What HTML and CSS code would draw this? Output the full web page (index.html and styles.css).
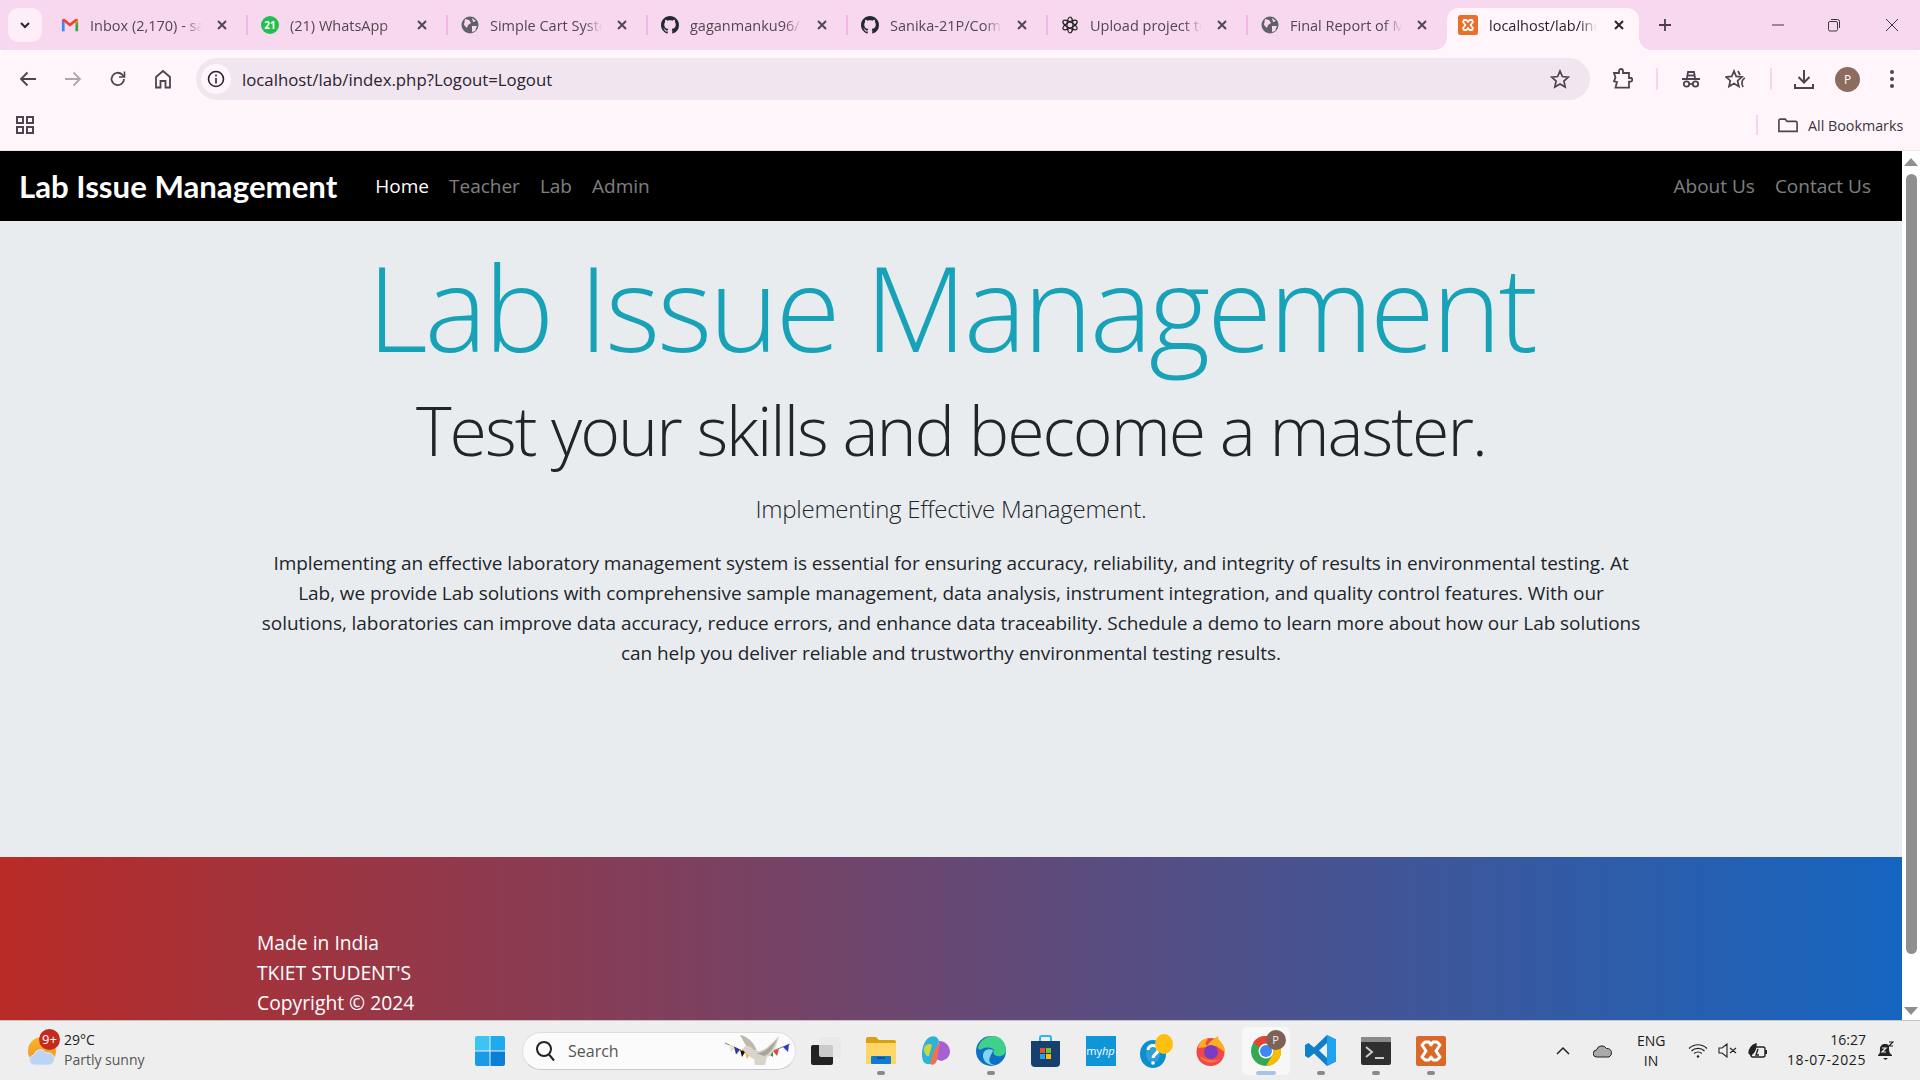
FILE: index.html
```html
<!DOCTYPE html>
<html lang="en">
<head>
    <meta charset="UTF-8">
    <title>Lab Issue Management</title>
    <link rel="stylesheet" href="styles.css">
</head>
<body>
    <div class="tabstrip">
        <div class="tab-menu"><svg width="14" height="14" viewBox="0 0 14 14"><path d="M3 5l4 4 4-4" fill="none" stroke="#2b2230" stroke-width="2"/></svg></div>
        <div class="tab">
            <svg class="favicon" viewBox="0 0 20 16"><path d="M1 15V3l3 2v10H2.500A1.500 1.500 0 0 1 1 15z" fill="#4285f4"/><path d="M16 15V5l3-2v12h-3z" fill="#34a853"/><path d="M1 3.500C1 1 3 .5 4.500 1.500L10 6l5.500-4.500C17 .5 19 1 19 3.500L16 6v-1l-6 5-6-5z" fill="#ea4335"/><path d="M16 5l3-2.500V4l-3 2.500z" fill="#fbbc04"/></svg>
            <span class="tab-title">Inbox (2,170) - sa</span>
            <svg class="tab-close" width="12" height="12" viewBox="0 0 12 12"><path d="M2 2l8 8M10 2l-8 8"/></svg>
        </div>
        <div class="tab">
            <span class="favicon wa-icon">21</span>
            <span class="tab-title">(21) WhatsApp</span>
            <svg class="tab-close" width="12" height="12" viewBox="0 0 12 12"><path d="M2 2l8 8M10 2l-8 8"/></svg>
        </div>
        <div class="tab">
            <svg class="favicon" viewBox="0 0 18 18"><circle cx="9" cy="9" r="8.500" fill="#5f6368"/><path d="M4 3l4 1 2 3-3 2-1 3-3-3zM11 2l4 3-3 1zM11 10l5 0-2 5-3 1z" fill="#f7d8ee"/></svg>
            <span class="tab-title">Simple Cart Syste</span>
            <svg class="tab-close" width="12" height="12" viewBox="0 0 12 12"><path d="M2 2l8 8M10 2l-8 8"/></svg>
        </div>
        <div class="tab">
            <svg class="favicon" viewBox="0 0 16 16"><path fill="#24292f" d="M8 0C3.58 0 0 3.58 0 8c0 3.54 2.29 6.530 5.470 7.590.4.07.55-.17.55-.38 0-.19-.01-.82-.01-1.490-2.010.37-2.530-.49-2.690-.94-.09-.23-.48-.94-.82-1.130-.28-.15-.68-.52-.01-.53.63-.01 1.080.58 1.230.82.72 1.210 1.870.87 2.330.66.07-.52.28-.87.51-1.070-1.780-.2-3.640-.89-3.640-3.950 0-.87.31-1.590.82-2.150-.08-.2-.36-1.020.08-2.120 0 0 .67-.21 2.200.82.64-.18 1.320-.27 2-.27.68 0 1.360.09 2 .27 1.530-1.040 2.200-.82 2.200-.82.44 1.100.16 1.920.08 2.120.51.56.82 1.270.82 2.150 0 3.070-1.870 3.750-3.650 3.950.29.25.54.73.54 1.480 0 1.070-.01 1.930-.01 2.200 0 .21.15.46.55.38A8.013 8.013 0 0 0 16 8c0-4.420-3.580-8-8-8z"/></svg>
            <span class="tab-title">gaganmanku96/</span>
            <svg class="tab-close" width="12" height="12" viewBox="0 0 12 12"><path d="M2 2l8 8M10 2l-8 8"/></svg>
        </div>
        <div class="tab">
            <svg class="favicon" viewBox="0 0 16 16"><path fill="#24292f" d="M8 0C3.58 0 0 3.58 0 8c0 3.54 2.29 6.530 5.470 7.590.4.07.55-.17.55-.38 0-.19-.01-.82-.01-1.490-2.010.37-2.530-.49-2.690-.94-.09-.23-.48-.94-.82-1.130-.28-.15-.68-.52-.01-.53.63-.01 1.080.58 1.230.82.72 1.210 1.870.87 2.330.66.07-.52.28-.87.51-1.070-1.780-.2-3.640-.89-3.640-3.950 0-.87.31-1.590.82-2.150-.08-.2-.36-1.020.08-2.120 0 0 .67-.21 2.200.82.64-.18 1.320-.27 2-.27.68 0 1.360.09 2 .27 1.530-1.040 2.200-.82 2.200-.82.44 1.100.16 1.920.08 2.120.51.56.82 1.270.82 2.150 0 3.070-1.870 3.750-3.650 3.950.29.25.54.73.54 1.480 0 1.070-.01 1.930-.01 2.200 0 .21.15.46.55.38A8.013 8.013 0 0 0 16 8c0-4.420-3.580-8-8-8z"/></svg>
            <span class="tab-title">Sanika-21P/Com</span>
            <svg class="tab-close" width="12" height="12" viewBox="0 0 12 12"><path d="M2 2l8 8M10 2l-8 8"/></svg>
        </div>
        <div class="tab">
            <svg class="favicon" viewBox="0 0 18 18" fill="none" stroke="#222" stroke-width="1.200"><ellipse cx="9" cy="9" rx="3" ry="8"/><ellipse cx="9" cy="9" rx="3" ry="8" transform="rotate(60 9 9)"/><ellipse cx="9" cy="9" rx="3" ry="8" transform="rotate(120 9 9)"/></svg>
            <span class="tab-title">Upload project to</span>
            <svg class="tab-close" width="12" height="12" viewBox="0 0 12 12"><path d="M2 2l8 8M10 2l-8 8"/></svg>
        </div>
        <div class="tab">
            <svg class="favicon" viewBox="0 0 18 18"><circle cx="9" cy="9" r="8.500" fill="#5f6368"/><path d="M4 3l4 1 2 3-3 2-1 3-3-3zM11 2l4 3-3 1zM11 10l5 0-2 5-3 1z" fill="#f7d8ee"/></svg>
            <span class="tab-title">Final Report of M</span>
            <svg class="tab-close" width="12" height="12" viewBox="0 0 12 12"><path d="M2 2l8 8M10 2l-8 8"/></svg>
        </div>
        <div class="tab active">
            <svg class="favicon" viewBox="0 0 20 20"><rect width="20" height="20" rx="2.500" fill="#e8702a"/><path d="M6 5h2.500l1.500 2 1.500-2H14l1 2-2.500 3 2.500 3-1 2h-2.500L10 13l-1.500 2H6l-1-2 2.500-3L5 7z" fill="none" stroke="#fff" stroke-width="1.800" stroke-linejoin="round"/></svg>
            <span class="tab-title">localhost/lab/ind</span>
            <svg class="tab-close" width="12" height="12" viewBox="0 0 12 12"><path d="M2 2l8 8M10 2l-8 8"/></svg>
        </div>
        <div class="new-tab"><svg width="14" height="14" viewBox="0 0 14 14"><path d="M7 1v12M1 7h12" stroke="#4a3d4a" stroke-width="1.800"/></svg></div>
        <div class="window-btns">
            <svg width="14" height="14" viewBox="0 0 14 14"><path d="M1 7h12" stroke="#3a3a3a"/></svg>
            <svg width="14" height="14" viewBox="0 0 14 14" fill="none" stroke="#3a3a3a"><rect x="1.500" y="3.500" width="9" height="9.500" rx="1.500"/><path d="M4 1.500h6.500a2 2 0 0 1 2 2V10"/></svg>
            <svg class="win-close" width="14" height="14" viewBox="0 0 14 14"><path d="M1 1l12 12M13 1L1 13" stroke="#3a3a3a"/></svg>
        </div>
    </div>

    <div class="toolbar">
        <div class="tool-btn"><svg width="18" height="18" viewBox="0 0 18 18" fill="none" stroke="#4f434f" stroke-width="1.800"><path d="M17 9H2M8.500 2.500L2 9l6.500 6.500"/></svg></div>
        <div class="tool-btn"><svg width="18" height="18" viewBox="0 0 18 18" fill="none" stroke="#b0a6ae" stroke-width="1.800"><path d="M1 9h15M9.500 2.500L16 9l-6.500 6.500"/></svg></div>
        <div class="tool-btn"><svg width="18" height="18" viewBox="0 0 18 18" fill="none" stroke="#4f434f" stroke-width="1.800"><path d="M15 9a6.200 6.200 0 1 1-1.800-4.400L15 6.500"/><path d="M15.500 1.500v5.500H10" stroke-width="1.600"/></svg></div>
        <div class="tool-btn"><svg width="18" height="20" viewBox="0 0 18 20" fill="none" stroke="#4f434f" stroke-width="1.800"><path d="M2 8l7-6 7 6v10.500h-4.500V12h-5v6.500H2z"/></svg></div>
        <div class="omnibox">
            <div class="info-btn"><svg width="18" height="18" viewBox="0 0 18 18" fill="none" stroke="#2b2230" stroke-width="1.600"><circle cx="9" cy="9" r="7.500"/><path d="M9 8v5.500M9 4.500v2"/></svg></div>
            <span class="url">localhost/lab/index.php?Logout=Logout</span>
            <svg class="omni-star" width="20" height="20" viewBox="0 0 20 20" fill="none" stroke="#4f434f" stroke-width="1.700"><path d="M10 2l2.400 5.500 6 .6-4.500 4 1.300 5.900L10 15l-5.200 3 1.300-5.900-4.500-4 6-.6z"/></svg>
        </div>
        <div class="tool-right">
            <div class="tool-slot puzzle"><svg width="22" height="22" viewBox="0 0 22 22" fill="none" stroke="#4f434f" stroke-width="1.800"><path d="M3 5h5V3a2 2 0 0 1 4 0v2h6v5h1.500a1.800 1.800 0 0 1 0 3.600H18v6H4.500l1.500-5.500-3-1 1.500-3.500z"/></svg></div>
            <span class="tool-sep"></span>
            <div class="tool-slot incog"><svg width="20" height="20" viewBox="0 0 20 20" fill="none" stroke="#4f434f" stroke-width="1.800"><path d="M6 9l1-6h6l1 6M1 10h18"/><path d="M6 6.500h8"/><circle cx="5.500" cy="15" r="2.700"/><circle cx="14.500" cy="15" r="2.700"/><path d="M8 15h4"/></svg></div>
            <div class="tool-slot star-list"><svg width="22" height="20" viewBox="0 0 22 20" fill="none" stroke="#4f434f" stroke-width="1.700"><path d="M9 2l2.200 5.400 5.800.5-4.400 3.800 1.300 5.800L9 14.500 4 17.500l1.300-5.800L1 7.900l5.800-.5z"/><path d="M13 2l2 4M20 9c-3 1-4 5-2 9"/></svg></div>
            <span class="tool-sep second"></span>
            <div class="tool-slot download"><svg width="22" height="22" viewBox="0 0 22 22" fill="none" stroke="#4f434f" stroke-width="2"><path d="M11 2v12M5.500 9l5.500 5.500L16.500 9M2 16v4h18v-4"/></svg></div>
            <div class="avatar">P</div>
            <div class="tool-slot kebab"><svg width="6" height="20" viewBox="0 0 6 20" fill="#4f434f"><circle cx="3" cy="3" r="2"/><circle cx="3" cy="10" r="2"/><circle cx="3" cy="17" r="2"/></svg></div>
        </div>
    </div>

    <div class="bookmarks">
        <svg width="18" height="18" viewBox="0 0 18 18" fill="none" stroke="#4f434f" stroke-width="2"><rect x="1" y="1" width="6" height="6"/><rect x="11" y="1" width="6" height="6"/><rect x="1" y="11" width="6" height="6"/><rect x="11" y="11" width="6" height="6"/></svg>
        <span class="book-sep"></span>
        <svg class="folder" width="20" height="15" viewBox="0 0 22 16" fill="none" stroke="#4f434f" stroke-width="1.800"><path d="M1 2.500A1.500 1.500 0 0 1 2.500 1H8l2 2.500h9.500A1.500 1.500 0 0 1 21 5v9.500H1z"/></svg>
        <span class="book-label">All Bookmarks</span>
    </div>

    <div class="viewport">
        <div class="page">
            <nav class="navbar">
                <a class="brand">Lab Issue Management</a>
                <a class="nav-link current">Home</a>
                <a class="nav-link">Teacher</a>
                <a class="nav-link">Lab</a>
                <a class="nav-link">Admin</a>
                <div class="nav-right">
                    <a class="nav-link">About Us</a>
                    <a class="nav-link">Contact Us</a>
                </div>
            </nav>
            <main class="hero">
                <h1 class="hero-title">Lab Issue Management</h1>
                <h2 class="hero-sub">Test your skills and become a master.</h2>
                <h4 class="hero-lead">Implementing Effective Management.</h4>
                <p class="hero-text">Implementing an effective laboratory management system is essential for ensuring accuracy, reliability, and integrity of results in environmental testing. At Lab, we provide Lab solutions with comprehensive sample management, data analysis, instrument integration, and quality control features. With our solutions, laboratories can improve data accuracy, reduce errors, and enhance data traceability. Schedule a demo to learn more about how our Lab solutions can help you deliver reliable and trustworthy environmental testing results.</p>
            </main>
            <footer class="footer">
                <p>Made in India</p>
                <p>TKIET STUDENT'S</p>
                <p>Copyright © 2024</p>
            </footer>
        </div>
        <div class="scrollbar">
            <span class="arrow-up"></span>
            <span class="thumb"></span>
            <span class="arrow-down"></span>
        </div>
    </div>

    <div class="taskbar">
        <div class="weather">
            <div class="weather-icon">
                <svg width="30" height="34" viewBox="0 0 30 34"><defs><linearGradient id="sun" x1="0" y1="0" x2="0" y2="1"><stop offset="0" stop-color="#f9b72c"/><stop offset="1" stop-color="#ef8f1e"/></linearGradient></defs><circle cx="15" cy="17" r="14" fill="url(#sun)"/><path d="M8 31a5 5 0 0 1-1-10 6.500 6.500 0 0 1 12-2 5.500 5.500 0 0 1 4 12z" fill="#bcd4f2" stroke="#dfeafa"/></svg>
                <span class="weather-badge">9+</span>
            </div>
            <div class="weather-text">
                <span>29°C</span>
                <span class="weather-sub">Partly sunny</span>
            </div>
        </div>
        <svg class="win-logo" width="30" height="30" viewBox="0 0 30 30"><path d="M0 2a2 2 0 0 1 2-2h12.500v14.500H0z" fill="#3cc4f5"/><path d="M15.500 0H28a2 2 0 0 1 2 2v12.500H15.500z" fill="#1eaaf0"/><path d="M0 15.500h14.500V30H2a2 2 0 0 1-2-2z" fill="#1a9be8"/><path d="M15.500 15.500H30V28a2 2 0 0 1-2 2H15.500z" fill="#0b7fd6"/></svg>
        <div class="searchbox">
            <svg width="20" height="22" viewBox="0 0 20 22" fill="none" stroke="#222" stroke-width="2"><circle cx="9" cy="9" r="7"/><path d="M14 14.500l5 6"/></svg>
            <span>Search</span>
            <svg class="dove" width="66" height="32" viewBox="0 0 66 32">
                <path d="M0 8l26 12M40 19l25-10" stroke="#8a7f78" fill="none"/>
                <path d="M4 9l7 3-5 5zM10 12l6 3-4 5z" fill="#e8dfc8"/>
                <path d="M9 11.500l6 3-4 5z" fill="#2a3a9a"/>
                <path d="M15 14.500l5 2.500-3 5z" fill="#111"/>
                <path d="M20 17l5 2-3 5z" fill="#f5b324"/>
                <path d="M42 18l6-2 0 6z" fill="#1c9a4a"/>
                <path d="M48 16l6-2-2 7z" fill="#e0443e"/>
                <path d="M58 12l6-3-1 8z" fill="#2a3acc"/>
                <path d="M15 0c7 1 14 7 17 16l-8-2C20 10 18 5 15 0z" fill="#bdb8ac"/>
                <path d="M18 14c1-4 7-4 11 1 8 4 15-4 25-14-2 9-6 19-12 21l-2 8H30l-1-6c-5-2-9-6-11-10z" fill="#d8d4ca"/>
                <path d="M31 18c7 1 14-6 21-14-3 8-7 15-13 17z" fill="#a8a59c"/>
                <path d="M18 14l-3 2 4 0z" fill="#e8813a"/>
            </svg>
        </div>
        <div class="task-icons">
            <div class="task-icon"><svg width="30" height="28" viewBox="0 0 30 28"><rect y="8" width="22" height="20" rx="2" fill="#222"/><rect x="8" width="22" height="20" rx="2" fill="#e8e8e8" opacity=".85"/></svg></div>
            <div class="task-icon open"><svg width="30" height="27" viewBox="0 0 30 27"><path d="M0 2a2 2 0 0 1 2-2h8l3 3h15a2 2 0 0 1 2 2v3H0z" fill="#d9a00f"/><path d="M0 6h30v21H0z" fill="#fcd768"/><rect x="5" y="19" width="20" height="8" rx="1" fill="#0f7ccf"/><path d="M11 21h8" stroke="#0b4a86" stroke-width="1.500"/></svg></div>
            <div class="task-icon"><svg width="28" height="30" viewBox="0 0 28 30"><path d="M8 1c4-2 8 0 9 4L12 22c-1 4-3 7-7 6-4-1-5-5-5-10C0 11 3 3 8 1z" fill="#2fb2d8"/><path d="M17 5c5 0 10 3 11 10 0 6-4 9-9 10l-5-2z" fill="#a65fd5"/><path d="M12 14l6-8-3 18c-1 4-4 6-7 4z" fill="#f0734f"/><path d="M2 12c2-4 5-5 8-3l-3 11c-3 1-5-3-5-8z" fill="#c9d642"/></svg></div>
            <div class="task-icon open"><svg width="30" height="30" viewBox="0 0 30 30"><circle cx="15" cy="15" r="15" fill="#0f6fc4"/><path d="M2 12C4 3 12 0 17 0c8 0 13 7 13 14 0 5-5 7-9 6-4-1-4-4-3-6-3-3-8-3-12-1-2 1-3 1-4-1z" fill="#3fd089"/><path d="M17 14c-5-2-10 0-10 6 0 5 5 10 13 9-6 0-8-4-6-8 1-3 3-5 3-7z" fill="#7fd4f4"/></svg></div>
            <div class="task-icon"><svg width="29" height="32" viewBox="0 0 29 32"><path d="M9 6V3a2 2 0 0 1 2-2h7a2 2 0 0 1 2 2v3" fill="none" stroke="#2bb5ee" stroke-width="2"/><path d="M0 6h29v22a4 4 0 0 1-4 4H4a4 4 0 0 1-4-4z" fill="#17406f"/><rect x="9" y="13" width="5" height="5" fill="#e8502a"/><rect x="15" y="13" width="5" height="5" fill="#7cbb2a"/><rect x="9" y="19" width="5" height="5" fill="#1ea3e8"/><rect x="15" y="19" width="5" height="5" fill="#fbbc04"/></svg></div>
            <div class="task-icon"><span class="myhp">my<i>hp</i></span></div>
            <div class="task-icon">
                <svg width="34" height="34" viewBox="0 0 34 34"><ellipse cx="14" cy="20" rx="13" ry="14" fill="#0b8fcf"/><ellipse cx="14" cy="20" rx="7" ry="9" fill="#fff" opacity=".15"/><path d="M9 16c0-6 10-6 10 0 0 4-5 4-5 8" fill="none" stroke="#fff" stroke-width="3"/><circle cx="14" cy="29" r="1.800" fill="#fff"/><ellipse cx="25" cy="10" rx="9" ry="10" fill="#fdc010"/></svg>
            </div>
            <div class="task-icon"><svg width="29" height="30" viewBox="0 0 29 30"><circle cx="14.500" cy="16" r="14" fill="#f0484a"/><path d="M2 12C4 4 10 1 12 4c-3 1-3 4-1 6 3-5 8-8 11-10 0 3 1 4 3 6 2 3 4 6 4 10L20 10z" fill="#fcae1c"/><circle cx="15" cy="16" r="7" fill="#7a3cc4"/><path d="M4 20c3 7 13 9 20 3-5 2-14 2-20-3z" fill="#f97c29"/></svg></div>
            <div class="task-icon chrome">
                <svg width="30" height="30" viewBox="0 0 30 30"><circle cx="15" cy="15" r="15" fill="#34a853"/><path d="M15 0a15 15 0 0 1 13 7.500H15a7.500 7.500 0 0 0-6.500 3.700L2.200 6.500A15 15 0 0 1 15 0z" fill="#ea4335"/><path d="M28 7.500A15 15 0 0 1 15 30l6.500-11.200A7.500 7.500 0 0 0 21.500 11z" fill="#fbbc04"/><circle cx="15" cy="15" r="7.500" fill="#fff"/><circle cx="15" cy="15" r="6" fill="#4285f4"/></svg>
                <span class="chrome-badge">P</span>
            </div>
            <div class="task-icon open"><svg width="31" height="31" viewBox="0 0 31 31"><path d="M22 0l9 4.500v22L22 31 9 18.500 3.500 23 0 21V10l3.500-2L9 12.500z" fill="#0f7fc9"/><path d="M22 0l9 4.500v22L22 31z" fill="#21a2ee"/><path d="M22 8l-8 7.500 8 7.500z" fill="#eef"/></svg></div>
            <div class="task-icon open"><svg width="30" height="28" viewBox="0 0 30 28"><rect width="30" height="28" rx="2" fill="#2f2f2f"/><path d="M0 2a2 2 0 0 1 2-2h26a2 2 0 0 1 2 2v3H0z" fill="#8a8a8a"/><path d="M5 10l6 5-6 5" fill="none" stroke="#ccc" stroke-width="2"/><path d="M14 21h9" stroke="#ccc" stroke-width="2"/></svg></div>
            <div class="task-icon open"><svg width="30" height="30" viewBox="0 0 30 30"><rect width="30" height="30" rx="2" fill="#d9692b"/><path d="M9 6h4l2 3 2-3h4l3 3-4 6 4 6-3 3h-4l-2-3-2 3H9l-3-3 4-6-4-6z" fill="none" stroke="#fff" stroke-width="3" stroke-linejoin="round"/></svg></div>
        </div>
        <div class="tray">
            <svg class="tray-chevron" width="14" height="9" viewBox="0 0 14 9" fill="none" stroke="#222" stroke-width="1.500"><path d="M1 8l6-6 6 6"/></svg>
            <svg class="tray-cloud" width="20" height="14" viewBox="0 0 20 14"><path d="M4 13a3.500 3.500 0 0 1-.5-7 5.500 5.500 0 0 1 10-1.500A4.500 4.500 0 0 1 16 13z" fill="#aaa" stroke="#222"/></svg>
            <div class="tray-lang">ENG<br>IN</div>
            <svg class="tray-wifi" width="20" height="15" viewBox="0 0 20 15" fill="none" stroke="#222" stroke-width="1.200"><path d="M1 5.500c5-5 13-5 18 0M3.500 8c3.500-3.500 9.500-3.500 13 0M6.200 10.500c2-2 5.600-2 7.600 0"/><circle cx="10" cy="13.500" r="1.200" fill="#222" stroke="none"/></svg>
            <svg class="tray-sound" width="19" height="15" viewBox="0 0 19 15" fill="none" stroke="#222" stroke-width="1.100"><path d="M1 5v5h3l5 4V1L4 5zM12 5l6 5M18 5l-6 5"/></svg>
            <svg class="tray-battery" width="20" height="16" viewBox="0 0 20 16" fill="none" stroke="#222" stroke-width="1.400"><rect x="3" y="4" width="14" height="10" rx="2"/><path d="M18 7v4" stroke-width="2"/><path d="M1 10c0-4 3-8 7-9 0 5-1 8-5 11z" fill="#222"/><path d="M10 6l-2 6h3" /></svg>
            <div class="tray-clock">16:27<br><span class="tray-date">18-07-2025</span></div>
            <svg class="tray-bell" width="17" height="20" viewBox="0 0 17 20"><path d="M1 14c2-1 2-3 2-6 0-3 2-5 5-5 1 0 3 0 4 2v3c0 3 1 5 3 6v1H1z" fill="#222"/><path d="M6 17h5l-2.500 2z" fill="#222"/><path d="M5 7h4L5 11h4" fill="none" stroke="#eee" stroke-width="1.200"/><path d="M12 1h4l-4 4h4" fill="none" stroke="#222" stroke-width="1.200"/></svg>
        </div>
    </div>
</body>
</html>
```

FILE: styles.css
```css
* {
    box-sizing: border-box;
}
html, body {
    margin: 0;
    padding: 0;
    height: 1080px;
    overflow: hidden;
}
body {
    font-family: "Open Sans", "Noto Sans", sans-serif;
    display: flex;
    flex-direction: column;
    background-color: #fff;
    color: #212529;
}
h1, h2, h4, p {
    margin: 0;
}

/* browser tabs */
.tabstrip {
    display: flex;
    align-items: center;
    height: 50px;
    flex-shrink: 0;
    padding-left: 8px;
    background-color: #f7d8ee;
}
.tab-menu {
    display: flex;
    justify-content: center;
    align-items: center;
    width: 34px;
    height: 34px;
    margin-right: 4px;
    border-radius: 10px;
    background-color: #fdeef8;
}
.tab {
    position: relative;
    display: flex;
    align-items: center;
    width: 200px;
    height: 42px;
    margin-top: 8px;
    padding: 0 0 8px 15px;
    flex-shrink: 0;
    font-size: 14.5px;
    color: #54474f;
}
.tab::after {
    content: "";
    position: absolute;
    right: -2px;
    top: 7px;
    width: 2px;
    height: 20px;
    background-color: #f3b9e2;
}
.tab:nth-child(8)::after {
    display: none;
}
.favicon {
    width: 18px;
    height: 18px;
    flex-shrink: 0;
}
.wa-icon {
    display: flex;
    justify-content: center;
    align-items: center;
    border-radius: 50%;
    background-color: #1fc04f;
    color: #fff;
    font-size: 10px;
    font-weight: 700;
}
.tab-title {
    width: 112px;
    margin-left: 11px;
    white-space: nowrap;
    -webkit-mask-image: linear-gradient(to right, #000 84%, transparent 100%);
    mask-image: linear-gradient(to right, #000 84%, transparent 100%);
}
.tab-close {
    flex-shrink: 0;
    margin-left: 14px;
    fill: none;
    stroke: #54474f;
    stroke-width: 2;
}
.tab.active {
    width: 192px;
    margin-left: 1px;
    padding-left: 11px;
    border-radius: 12px 12px 0 0;
    background-color: #fff5fa;
    color: #2b2230;
}
/* the flared feet of the open tab */
.tab.active::before,
.tab.active::after {
    content: "";
    position: absolute;
    top: auto;
    bottom: 0;
    width: 12px;
    height: 12px;
    background-color: transparent;
}
.tab.active::before {
    left: -12px;
    background-image: radial-gradient(circle at 0 0, transparent 11.500px, #fff5fa 12px);
}
.tab.active::after {
    right: -12px;
    background-image: radial-gradient(circle at 100% 0, transparent 11.500px, #fff5fa 12px);
}
.tab.active .favicon {
    width: 20px;
    height: 20px;
}
.tab.active .tab-title {
    width: 108px;
}
.tab.active .tab-close {
    margin-left: 16px;
    stroke: #2b2230;
}
.new-tab {
    margin-left: 19px;
    display: flex;
}
.window-btns {
    display: flex;
    align-items: center;
    gap: 42px;
    margin-left: auto;
    padding-right: 21px;
}
.win-close {
    margin-left: 2px;
}

/* toolbar */
.toolbar {
    display: flex;
    align-items: center;
    height: 52px;
    flex-shrink: 0;
    padding: 6px 0 0 5px;
    border-radius: 8px 8px 0 0;
    background-color: #fff5fa;
}
.tool-btn {
    display: flex;
    justify-content: center;
    align-items: center;
    width: 45px;
}
.omnibox {
    display: flex;
    align-items: center;
    width: 1394px;
    height: 42px;
    margin-left: 11px;
    padding: 0 20px 0 5px;
    border-radius: 21px;
    background-color: #f1e6ef;
}
.info-btn {
    display: flex;
    justify-content: center;
    align-items: center;
    width: 30px;
    height: 30px;
    border-radius: 50%;
    background-color: #fff5fa;
}
.url {
    margin-left: 11px;
    font-size: 16.800px;
    color: #2b2230;
}
.omni-star {
    margin-left: auto;
}
.tool-right {
    display: flex;
    align-items: center;
    flex: 1;
    height: 42px;
}
.tool-slot {
    display: flex;
    align-items: center;
}
.puzzle {
    margin-left: 21px;
}
.tool-sep {
    width: 2px;
    height: 22px;
    margin-left: 23px;
    background-color: #f9d4ee;
}
.incog {
    margin-left: 23px;
}
.star-list {
    margin-left: 24px;
}
.tool-sep.second {
    margin-left: 23px;
}
.download {
    margin-left: 21px;
}
.avatar {
    display: flex;
    justify-content: center;
    align-items: center;
    width: 25px;
    height: 25px;
    margin-left: 20px;
    border-radius: 50%;
    background-color: #8c6c5e;
    color: #fff;
    font-size: 12px;
}
.kebab {
    margin-left: 29px;
}

/* bookmarks */
.bookmarks {
    display: flex;
    align-items: center;
    height: 49px;
    flex-shrink: 0;
    padding: 0 0 2px 16px;
    background-color: #fff5fa;
    border-bottom: 1px solid #f0e4ea;
}
.book-sep {
    width: 2px;
    height: 20px;
    margin-left: auto;
    background-color: #f9d4ee;
}
.folder {
    margin-left: 20px;
}
.book-label {
    width: 122px;
    padding-left: 10px;
    font-size: 14.300px;
    white-space: nowrap;
    color: #3c3340;
}

/* page */
.viewport {
    display: flex;
    flex: 1;
    min-height: 0;
}
.page {
    display: flex;
    flex-direction: column;
    flex: 1;
    min-width: 0;
}
.navbar {
    display: flex;
    align-items: center;
    height: 70px;
    flex-shrink: 0;
    padding: 0 21px 0 19px;
    background-color: #000;
}
.brand {
    margin-right: 28px;
    font-family: "Lato", sans-serif;
    font-size: 31.200px;
    font-weight: 700;
    color: #fff;
    white-space: nowrap;
}
.nav-link {
    padding: 0 10px;
    font-size: 19px;
    color: rgba(255, 255, 255, 0.5);
    white-space: nowrap;
}
.nav-link.current {
    color: #fff;
}
.nav-right {
    display: flex;
    margin-left: auto;
}
.hero {
    flex: 1;
    padding-top: 15px;
    text-align: center;
    background-color: #e9ecef;
}
.hero-title {
    font-size: 118px;
    font-weight: 300;
    line-height: 1.2;
    letter-spacing: -3.100px;
    color: #17a2b8;
}
.hero-sub {
    margin-top: 11px;
    font-size: 68px;
    font-weight: 300;
    line-height: 1.2;
    letter-spacing: -2px;
}
.hero-lead {
    margin-top: 25px;
    font-size: 24px;
    font-weight: 300;
    line-height: 1.2;
    letter-spacing: -0.250px;
}
.hero-text {
    width: 1385px;
    margin: 24px auto 0;
    font-size: 19px;
    line-height: 30px;
    letter-spacing: -0.060px;
}
.footer {
    display: flex;
    flex-direction: column;
    justify-content: flex-end;
    height: 163px;
    flex-shrink: 0;
    padding: 0 0 2px 257px;
    background: linear-gradient(to right, #b92b27, #1565c0);
    color: #fff;
    font-size: 19.300px;
    line-height: 30px;
}
.scrollbar {
    display: flex;
    flex-direction: column;
    align-items: center;
    width: 18px;
    flex-shrink: 0;
    padding: 7px 0 5px;
    background-color: #fff;
}
.arrow-up, .arrow-down {
    width: 0;
    height: 0;
    border-left: 7px solid transparent;
    border-right: 7px solid transparent;
}
.arrow-up {
    border-bottom: 8px solid #8f8f8f;
}
.arrow-down {
    margin-top: auto;
    border-top: 8px solid #8f8f8f;
}
.thumb {
    width: 11px;
    height: 780px;
    margin-top: 8px;
    border-radius: 6px;
    background-color: #8f8f8f;
}

/* taskbar */
.taskbar {
    display: flex;
    align-items: center;
    height: 60px;
    flex-shrink: 0;
    border-top: 1px solid #c4c4c4;
    background-color: #eeeeee;
    color: #1c1c1c;
}
.weather {
    display: flex;
    align-items: center;
    width: 475px;
    padding-left: 27px;
}
.weather-icon {
    position: relative;
    display: flex;
}
.weather-badge {
    position: absolute;
    left: 12px;
    top: -5px;
    width: 21px;
    height: 21px;
    border-radius: 50%;
    background-color: #c42b1c;
    color: #fff;
    font-size: 13px;
    line-height: 20px;
    text-align: center;
}
.weather-text {
    display: flex;
    flex-direction: column;
    margin: -2px 0 0 7px;
    font-size: 14px;
    line-height: 20px;
}
.weather-sub {
    color: #555;
}
.searchbox {
    display: flex;
    align-items: center;
    width: 274px;
    height: 38px;
    margin-left: 17px;
    padding: 0 4px 0 12px;
    border: 1px solid #dedede;
    border-bottom-color: #c8c8c8;
    border-radius: 19px;
    background-color: #fbfbfb;
    font-size: 16px;
    color: #555;
}
.searchbox span {
    margin-left: 13px;
}
.dove {
    margin-left: auto;
}
.task-icons {
    display: flex;
    margin-left: 2px;
}
.task-icon {
    position: relative;
    display: flex;
    justify-content: center;
    align-items: center;
    width: 55px;
    height: 48px;
}
.task-icon.open::after,
.chrome::after {
    content: "";
    position: absolute;
    left: 24px;
    bottom: 0;
    width: 8px;
    height: 4px;
    border-radius: 2px;
    background-color: #8a8a8a;
}
.chrome {
    width: 48px;
    margin: 0 3.500px;
    border-radius: 5px;
    background-color: #f7f7f7;
}
.chrome::after {
    left: 14px;
    width: 20px;
    background-color: #a9c4e4;
}
.chrome-badge {
    position: absolute;
    left: 24px;
    top: 3px;
    width: 20px;
    height: 20px;
    border-radius: 50%;
    background-color: #7d6257;
    color: #eee;
    font-size: 11px;
    line-height: 20px;
    text-align: center;
}
.myhp {
    display: flex;
    justify-content: center;
    align-items: center;
    width: 30px;
    height: 30px;
    background-color: #0f96d8;
    color: #fff;
    font-size: 11px;
}
.tray {
    flex: 1;
    display: flex;
    align-items: center;
    padding-left: 98px;
}
.tray-cloud {
    margin-left: 23px;
}
.tray-lang {
    width: 28px;
    margin-left: 24px;
    font-size: 14px;
    line-height: 20px;
    text-align: center;
}
.tray-wifi {
    margin-left: 23px;
}
.tray-sound {
    margin-left: 10px;
}
.tray-battery {
    margin-left: 11px;
}
.tray-clock {
    width: 98px;
    margin-top: -2px;
    font-size: 14px;
    line-height: 20px;
    text-align: right;
}
.tray-date {
    letter-spacing: 0.600px;
}
.tray-bell {
    margin-left: 11px;
}
```
